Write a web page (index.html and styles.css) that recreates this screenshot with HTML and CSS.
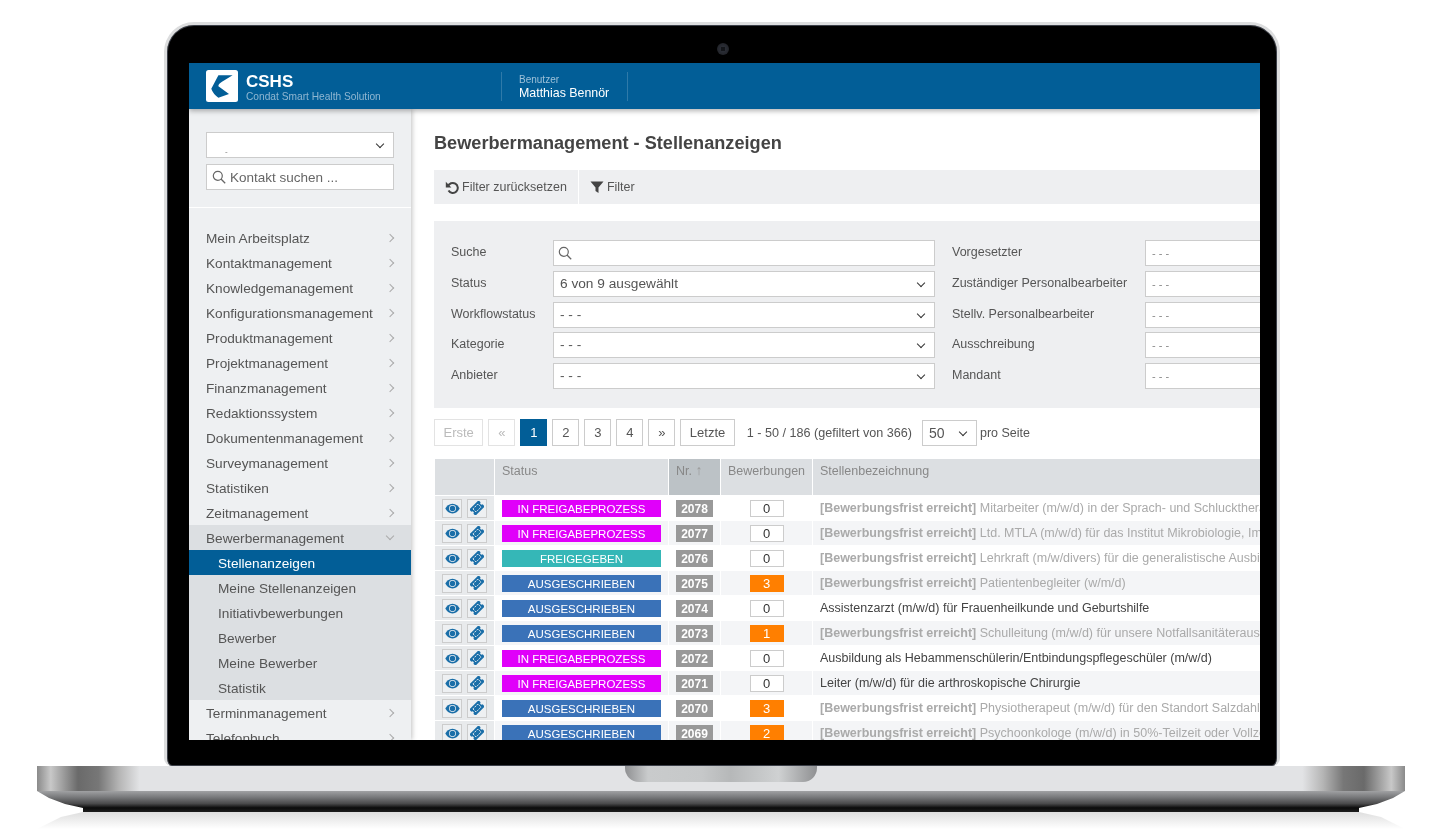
FILE: index.html
```html
<!DOCTYPE html>
<html lang="de">
<head>
    <meta charset="UTF-8">
    <title>CSHS - Bewerbermanagement</title>
    <link rel="stylesheet" href="styles.css">
</head>
<body>

<svg class="sprite" width="0" height="0">
    <symbol id="i-eye" viewBox="0 0 20 14">
        <path d="M10 .5C5.500 .5 2 3.500 .4 7c1.600 3.500 5.100 6.500 9.600 6.500s8-3 9.600-6.500C18 3.500 14.500 .5 10 .5z"/>
        <circle cx="10" cy="7" r="4.600" fill="#eef0f2"/>
        <circle cx="10" cy="7" r="3.600"/>
    </symbol>
    <symbol id="i-ticket" viewBox="0 0 16 16">
        <g transform="rotate(-45 8 8)">
            <path d="M.5 3h15v3.400a1.600 1.600 0 0 0 0 3.200V13H.5V9.600a1.600 1.600 0 0 0 0-3.200z"/>
            <path d="M4 5.500h8v5H4z" fill="none" stroke="#eef0f2" stroke-width="1" stroke-dasharray="2 1"/>
        </g>
    </symbol>
    <symbol id="i-search" viewBox="0 0 14 14">
        <circle cx="5.800" cy="5.800" r="4.500" fill="none" stroke="currentColor" stroke-width="1.200"/>
        <path d="M9 9l4.200 4.200" stroke="currentColor" stroke-width="1.300"/>
    </symbol>
</svg>

<div class="laptop">
    <div class="lid">
        <div class="camera"></div>
        <div class="screen">
            <header class="topbar">
                <svg class="logo" viewBox="0 0 32 32">
                    <rect width="32" height="32" rx="2.500" fill="#fff"/>
                    <path d="M12.400 5.300H26.600L16 11.700Q12 14 12.400 16.300L23 24l-10.600 3.700Q7 24 5.300 18.800z" fill="#025e97"/>
                </svg>
                <div class="brand">
                    <div class="brand-name">CSHS</div>
                    <div class="brand-sub">Condat Smart Health Solution</div>
                </div>
                <div class="user">
                    <div class="user-label">Benutzer</div>
                    <div class="user-name">Matthias Bennör</div>
                </div>
            </header>

            <div class="app">
                <aside class="sidebar">
                    <div class="side-top">
                        <div class="select side-select"><span class="dot-text">-</span></div>
                        <div class="contact-search">
                            <svg class="icon-search"><use href="#i-search"/></svg>
                            <span>Kontakt suchen ...</span>
                        </div>
                    </div>
                    <nav class="menu">
                        <a class="menu-item">Mein Arbeitsplatz</a>
                        <a class="menu-item">Kontaktmanagement</a>
                        <a class="menu-item">Knowledgemanagement</a>
                        <a class="menu-item">Konfigurationsmanagement</a>
                        <a class="menu-item">Produktmanagement</a>
                        <a class="menu-item">Projektmanagement</a>
                        <a class="menu-item">Finanzmanagement</a>
                        <a class="menu-item">Redaktionssystem</a>
                        <a class="menu-item">Dokumentenmanagement</a>
                        <a class="menu-item">Surveymanagement</a>
                        <a class="menu-item">Statistiken</a>
                        <a class="menu-item">Zeitmanagement</a>
                        <a class="menu-item open">Bewerbermanagement</a>
                        <div class="submenu">
                            <a class="sub-item active">Stellenanzeigen</a>
                            <a class="sub-item">Meine Stellenanzeigen</a>
                            <a class="sub-item">Initiativbewerbungen</a>
                            <a class="sub-item">Bewerber</a>
                            <a class="sub-item">Meine Bewerber</a>
                            <a class="sub-item">Statistik</a>
                        </div>
                        <a class="menu-item">Terminmanagement</a>
                        <a class="menu-item">Telefonbuch</a>
                    </nav>
                </aside>

                <main class="main">
                    <div class="content">
                        <h1 class="title">Bewerbermanagement - Stellenanzeigen</h1>

                        <div class="toolbar">
                            <button class="tool-btn">
                                <svg class="tool-icon" viewBox="0 0 14 14"><path d="M3 6.500A5 5 0 1 1 3.500 10.500" fill="none" stroke="#444" stroke-width="2"/><path d="M.8 1.800v5.600h5.600z" fill="#444"/></svg>
                                Filter zurücksetzen
                            </button>
                            <button class="tool-btn">
                                <svg class="tool-icon" viewBox="0 0 14 14"><path d="M.5 1.500h13L8.500 7.500V13l-3-2V7.500z" fill="#444"/></svg>
                                Filter
                            </button>
                        </div>

                        <section class="filters">
                            <label>Suche</label>
                            <div class="input"><svg class="icon-search"><use href="#i-search"/></svg></div>
                            <label>Vorgesetzter</label>
                            <div class="select muted">- - -</div>

                            <label>Status</label>
                            <div class="select">6 von 9 ausgewählt</div>
                            <label>Zuständiger Personalbearbeiter</label>
                            <div class="select muted">- - -</div>

                            <label>Workflowstatus</label>
                            <div class="select">- - -</div>
                            <label>Stellv. Personalbearbeiter</label>
                            <div class="select muted">- - -</div>

                            <label>Kategorie</label>
                            <div class="select">- - -</div>
                            <label>Ausschreibung</label>
                            <div class="select muted">- - -</div>

                            <label>Anbieter</label>
                            <div class="select">- - -</div>
                            <label>Mandant</label>
                            <div class="select muted">- - -</div>
                        </section>

                        <div class="pager">
                            <span class="page page-text disabled">Erste</span>
                            <span class="page disabled">«</span>
                            <span class="page current">1</span>
                            <span class="page">2</span>
                            <span class="page">3</span>
                            <span class="page">4</span>
                            <span class="page">»</span>
                            <span class="page page-text">Letzte</span>
                            <span class="page-info">1 - 50 / 186 (gefiltert von 366)</span>
                            <div class="select per-page">50</div>
                            <span class="per-label">pro Seite</span>
                        </div>

                        <table class="jobs">
                            <colgroup>
                                <col class="col-actions"><col class="col-status"><col class="col-nr"><col class="col-count"><col class="col-name">
                            </colgroup>
                            <thead>
                                <tr>
                                    <th></th>
                                    <th>Status</th>
                                    <th class="sorted">Nr. <span class="arrow">↑</span></th>
                                    <th>Bewerbungen</th>
                                    <th>Stellenbezeichnung</th>
                                </tr>
                            </thead>
                            <tbody>
                                <tr>
                                    <td class="actions"><span class="act"><svg class="i-eye"><use href="#i-eye"/></svg></span><span class="act"><svg class="i-ticket"><use href="#i-ticket"/></svg></span></td>
                                    <td><span class="status review">IN FREIGABEPROZESS</span></td>
                                    <td><span class="nr">2078</span></td>
                                    <td><span class="count">0</span></td>
                                    <td class="name expired"><b>[Bewerbungsfrist erreicht]</b> Mitarbeiter (m/w/d) in der Sprach- und Schlucktherapie</td>
                                </tr>
                                <tr>
                                    <td class="actions"><span class="act"><svg class="i-eye"><use href="#i-eye"/></svg></span><span class="act"><svg class="i-ticket"><use href="#i-ticket"/></svg></span></td>
                                    <td><span class="status review">IN FREIGABEPROZESS</span></td>
                                    <td><span class="nr">2077</span></td>
                                    <td><span class="count">0</span></td>
                                    <td class="name expired"><b>[Bewerbungsfrist erreicht]</b> Ltd. MTLA (m/w/d) für das Institut Mikrobiologie, Immunologie</td>
                                </tr>
                                <tr>
                                    <td class="actions"><span class="act"><svg class="i-eye"><use href="#i-eye"/></svg></span><span class="act"><svg class="i-ticket"><use href="#i-ticket"/></svg></span></td>
                                    <td><span class="status approved">FREIGEGEBEN</span></td>
                                    <td><span class="nr">2076</span></td>
                                    <td><span class="count">0</span></td>
                                    <td class="name expired"><b>[Bewerbungsfrist erreicht]</b> Lehrkraft (m/w/divers) für die generalistische Ausbildung</td>
                                </tr>
                                <tr>
                                    <td class="actions"><span class="act"><svg class="i-eye"><use href="#i-eye"/></svg></span><span class="act"><svg class="i-ticket"><use href="#i-ticket"/></svg></span></td>
                                    <td><span class="status posted">AUSGESCHRIEBEN</span></td>
                                    <td><span class="nr">2075</span></td>
                                    <td><span class="count hot">3</span></td>
                                    <td class="name expired"><b>[Bewerbungsfrist erreicht]</b> Patientenbegleiter (w/m/d)</td>
                                </tr>
                                <tr>
                                    <td class="actions"><span class="act"><svg class="i-eye"><use href="#i-eye"/></svg></span><span class="act"><svg class="i-ticket"><use href="#i-ticket"/></svg></span></td>
                                    <td><span class="status posted">AUSGESCHRIEBEN</span></td>
                                    <td><span class="nr">2074</span></td>
                                    <td><span class="count">0</span></td>
                                    <td class="name">Assistenzarzt (m/w/d) für Frauenheilkunde und Geburtshilfe</td>
                                </tr>
                                <tr>
                                    <td class="actions"><span class="act"><svg class="i-eye"><use href="#i-eye"/></svg></span><span class="act"><svg class="i-ticket"><use href="#i-ticket"/></svg></span></td>
                                    <td><span class="status posted">AUSGESCHRIEBEN</span></td>
                                    <td><span class="nr">2073</span></td>
                                    <td><span class="count hot">1</span></td>
                                    <td class="name expired"><b>[Bewerbungsfrist erreicht]</b> Schulleitung (m/w/d) für unsere Notfallsanitäterausbildung</td>
                                </tr>
                                <tr>
                                    <td class="actions"><span class="act"><svg class="i-eye"><use href="#i-eye"/></svg></span><span class="act"><svg class="i-ticket"><use href="#i-ticket"/></svg></span></td>
                                    <td><span class="status review">IN FREIGABEPROZESS</span></td>
                                    <td><span class="nr">2072</span></td>
                                    <td><span class="count">0</span></td>
                                    <td class="name">Ausbildung als Hebammenschülerin/Entbindungspflegeschüler (m/w/d)</td>
                                </tr>
                                <tr>
                                    <td class="actions"><span class="act"><svg class="i-eye"><use href="#i-eye"/></svg></span><span class="act"><svg class="i-ticket"><use href="#i-ticket"/></svg></span></td>
                                    <td><span class="status review">IN FREIGABEPROZESS</span></td>
                                    <td><span class="nr">2071</span></td>
                                    <td><span class="count">0</span></td>
                                    <td class="name">Leiter (m/w/d) für die arthroskopische Chirurgie</td>
                                </tr>
                                <tr>
                                    <td class="actions"><span class="act"><svg class="i-eye"><use href="#i-eye"/></svg></span><span class="act"><svg class="i-ticket"><use href="#i-ticket"/></svg></span></td>
                                    <td><span class="status posted">AUSGESCHRIEBEN</span></td>
                                    <td><span class="nr">2070</span></td>
                                    <td><span class="count hot">3</span></td>
                                    <td class="name expired"><b>[Bewerbungsfrist erreicht]</b> Physiotherapeut (m/w/d) für den Standort Salzdahlum</td>
                                </tr>
                                <tr>
                                    <td class="actions"><span class="act"><svg class="i-eye"><use href="#i-eye"/></svg></span><span class="act"><svg class="i-ticket"><use href="#i-ticket"/></svg></span></td>
                                    <td><span class="status posted">AUSGESCHRIEBEN</span></td>
                                    <td><span class="nr">2069</span></td>
                                    <td><span class="count hot">2</span></td>
                                    <td class="name expired"><b>[Bewerbungsfrist erreicht]</b> Psychoonkologe (m/w/d) in 50%-Teilzeit oder Vollzeit</td>
                                </tr>
                            </tbody>
                        </table>
                    </div>
                </main>
            </div>
        </div>
    </div>

    <div class="base">
        <div class="base-top"><div class="notch"></div></div>
        <div class="base-bottom"></div>
        <div class="base-reflection"></div>
    </div>
</div>

</body>
</html>
```

FILE: styles.css
```css
* { box-sizing: border-box; }
html, body { height: 100%; }
body { margin: 0; background: #fff; color: #444; font-family: "Liberation Sans", Arial, sans-serif; font-size: 13px; overflow: hidden; }
.sprite { position: absolute; }

/* laptop frame */
.laptop { padding-top: 22px; }
.lid { width: 1116px; height: 744px; margin-left: 164px; padding: 18px 17px 0 22px; background: #000; border: 3px solid #dcddde; border-bottom: 0; border-radius: 30px 30px 8px 8px; box-shadow: inset 0 0 0 1px #3b3f48; }
.camera { width: 12px; height: 12px; margin: 0 0 8px 528px; border-radius: 50%; background: radial-gradient(circle, #14161a 25%, #2a2d35 30%, #23252b 65%, #111 100%); }
.screen { width: 1071px; height: 677px; overflow: hidden; background: #fff; filter: blur(.5px); }
.base { width: 1368px; margin-left: 37px; }
.base-top { height: 25px; display: flex; justify-content: center; background: linear-gradient(90deg, #8a8a8a 0, #c8c8c8 1%, #6a6a6a 3%, #777 4.500%, #b5b5b5 6%, #e2e3e5 7.500%, #e2e3e5 92.500%, #b5b5b5 94%, #777 95.500%, #6a6a6a 97%, #c8c8c8 99%, #8a8a8a 100%); }
.notch { width: 192px; height: 16px; border-radius: 0 0 14px 14px; background: linear-gradient(90deg, #8f9092 0, #c9cbcc 12%, #c6c8c9 40%, #b6b8b9 55%, #cfd1d2 80%, #8f9092 100%); }
.base-bottom { height: 21px; background: linear-gradient(#a0a1a3 0, #77787a 30%, #4a4a4b 60%, #0c0c0c 80%, #1d1d1d 100%); clip-path: polygon(0 0, 100% 0, calc(100% - 12px) 7px, calc(100% - 28px) 13px, calc(100% - 46px) 17px, calc(100% - 46px) 100%, 46px 100%, 46px 17px, 28px 13px, 12px 7px); }
.base-reflection { height: 17px; background: linear-gradient(#dedede, #fff); clip-path: polygon(46px 0, calc(100% - 46px) 0, calc(100% - 24px) 5px, 100% 100%, 0 100%, 24px 5px); }

/* top bar */
.topbar { height: 46px; display: flex; align-items: center; padding-left: 17px; background: #025e97; color: #fff; position: relative; z-index: 2; box-shadow: 0 2px 5px rgba(0, 0, 0, .3); }
.logo { width: 32px; height: 32px; flex: none; }
.brand { width: 263px; padding-left: 8px; padding-top: 3px; }
.brand-name { font-size: 17px; font-weight: bold; line-height: 18px; }
.brand-sub { font-size: 10.200px; line-height: 11px; color: #8fb6d1; }
.user { width: 127px; height: 29px; padding: 2px 0 0 17px; border-left: 1px solid #2f7aa9; border-right: 1px solid #2f7aa9; }
.user-label { font-size: 10px; line-height: 12px; color: #9dc0d8; }
.user-name { font-size: 12.400px; line-height: 15px; }

/* sidebar */
.app { display: flex; height: 631px; }
.sidebar { width: 222px; flex: none; background: #eef0f2; box-shadow: 1px 0 5px rgba(0, 0, 0, .25); position: relative; z-index: 1; font-size: 13.650px; }
.side-top { height: 99px; padding: 23px 17px 0; border-bottom: 1px solid #fff; }
.side-select { height: 26px; }
.side-select::after { right: 9px; }
.dot-text { display: block; font-size: 8px; line-height: 38px; margin-left: 12px; color: #777; }
.contact-search { height: 26px; margin-top: 6px; padding-left: 5px; display: flex; align-items: center; gap: 4px; background: #fff; border: 1px solid #ccc; font-size: 13.500px; color: #666; }
.contact-search span { line-height: 26px; padding-top: 1px; }
.icon-search { width: 14px; height: 14px; color: #666; flex: none; }
.menu { padding-top: 17px; }
.menu-item { display: block; position: relative; height: 25px; line-height: 27px; padding-left: 17px; color: #555; }
.menu-item::after { content: ""; position: absolute; right: 18px; top: 10px; width: 5px; height: 5px; border-top: 1px solid #aaa; border-right: 1px solid #aaa; transform: rotate(45deg); }
.menu-item.open { background: #dcdfe2; }
.menu-item.open::after { top: 8px; transform: rotate(135deg); }
.submenu { background: #dcdfe2; }
.sub-item { display: block; height: 25px; line-height: 27px; padding-left: 29px; color: #555; }
.sub-item.active { background: #025e97; color: #fff; }

/* main */
.main { flex: 1; overflow: hidden; background: #fff; }
.content { width: 1100px; padding: 22px 0 0 23px; }
.title { margin: 0 0 -1px; font-size: 18.150px; line-height: 22px; padding-top: 1px; color: #444; }
.toolbar { height: 34px; margin-top: 17px; display: flex; background: #eeeff1; }
.tool-btn { display: flex; align-items: center; gap: 3px; padding: 0 11px; background: none; border: 0; font: inherit; font-size: 12.500px; color: #555; }
.tool-btn:first-child { border-right: 1px solid #fff; }
.tool-icon { width: 14px; height: 14px; }
.filters { margin-top: 17px; padding: 19px 0 19px 17px; display: grid; grid-template-columns: 102px 382px 210px 220px; grid-auto-rows: 26px; row-gap: 4.750px; background: #eeeff1; }
.filters label { color: #555; line-height: 25px; font-size: 12.500px; }
.filters label:nth-child(4n+3) { padding-left: 17px; }
.select, .input { position: relative; height: 26px; line-height: 24px; padding-left: 6px; background: #fff; border: 1px solid #ccc; color: #555; font-size: 13.700px; }
.select::after { content: ""; position: absolute; right: 10px; top: 8px; width: 5px; height: 5px; border-right: 1.500px solid #333; border-bottom: 1.500px solid #333; transform: rotate(45deg); }
.input { padding-left: 4px; }
.input .icon-search { margin-top: 5px; }
.select.muted { font-size: 11px; color: #888; }
.muted::after { display: none; }

/* pager */
.pager { margin-top: 11px; height: 27px; display: flex; align-items: center; gap: 5px; }
.page { width: 27px; height: 27px; line-height: 25px; text-align: center; background: #fff; border: 1px solid #ccc; color: #555; }
.page-text { width: auto; padding: 0 8.500px; }
.page.disabled { color: #bbb; border-color: #e3e3e3; }
.page.current { background: #025e97; border-color: #025e97; color: #fff; }
.page-info { margin-left: 7px; color: #555; font-size: 12.600px; }
.select.per-page { width: 55px; margin-left: 5px; font-size: 14px; }
.per-label { margin-left: -2px; color: #555; font-size: 12.500px; }

/* table */
.jobs { margin: 13px 0 0 1px; width: 878px; table-layout: fixed; border-collapse: separate; border-spacing: 0; }
.col-actions { width: 60px; }
.col-status { width: 174px; }
.col-nr { width: 52px; }
.col-count { width: 92px; }
.col-name { width: 500px; }
.jobs th { height: 37px; padding: 5px 7px 0; vertical-align: top; text-align: left; font-weight: normal; font-size: 12.500px; color: #888; background: #dcdfe2; border-right: 1px solid #fff; border-bottom: 1px solid #fff; white-space: nowrap; }
.jobs th.sorted { background: #bcc2c6; }
.jobs th:nth-child(4) { text-align: center; padding: 5px 0 0; }
.arrow { color: #999; font-size: 14px; line-height: 12px; }
.jobs td { height: 25px; padding: 0; text-align: center; border-right: 1px solid #fff; border-bottom: 1px solid #fff; background: #fff; }
.jobs tbody tr:nth-child(even) td { background: #f4f5f7; }
.jobs td.actions { background: #e8eaec; white-space: nowrap; font-size: 0; }
.jobs tr:nth-child(even) td.actions { background: #e8eaec; }
.act { display: inline-flex; align-items: center; justify-content: center; width: 20px; height: 19px; margin: 0 2.500px; background: #eef0f2; border: 1px solid #ccc; vertical-align: middle; }
.i-eye { width: 15px; height: 11px; fill: #1a6ea8; }
.i-ticket { width: 14px; height: 14px; fill: #1a6ea8; }
.status { display: block; width: 159px; height: 17px; margin-left: 7px; line-height: 18px; font-size: 11.500px; color: #fff; }
.review { background: #e000fa; }
.approved { background: #35b7b7; }
.posted { background: #3a72b8; }
.nr { display: block; width: 37px; height: 17px; margin-left: 7px; line-height: 18px; background: #999; color: #fff; font-weight: bold; font-size: 12px; }
.count { display: inline-block; width: 34px; height: 17px; line-height: 16px; background: #fff; border: 1px solid #ccc; font-size: 13px; color: #333; vertical-align: middle; }
.count.hot { background: #ff7f00; border-color: #ff7f00; color: #fff; }
.jobs td.name { padding-left: 7px; text-align: left; white-space: nowrap; overflow: hidden; font-size: 12.500px; color: #444; }
.jobs td.name.expired { color: #aaa; }
```
